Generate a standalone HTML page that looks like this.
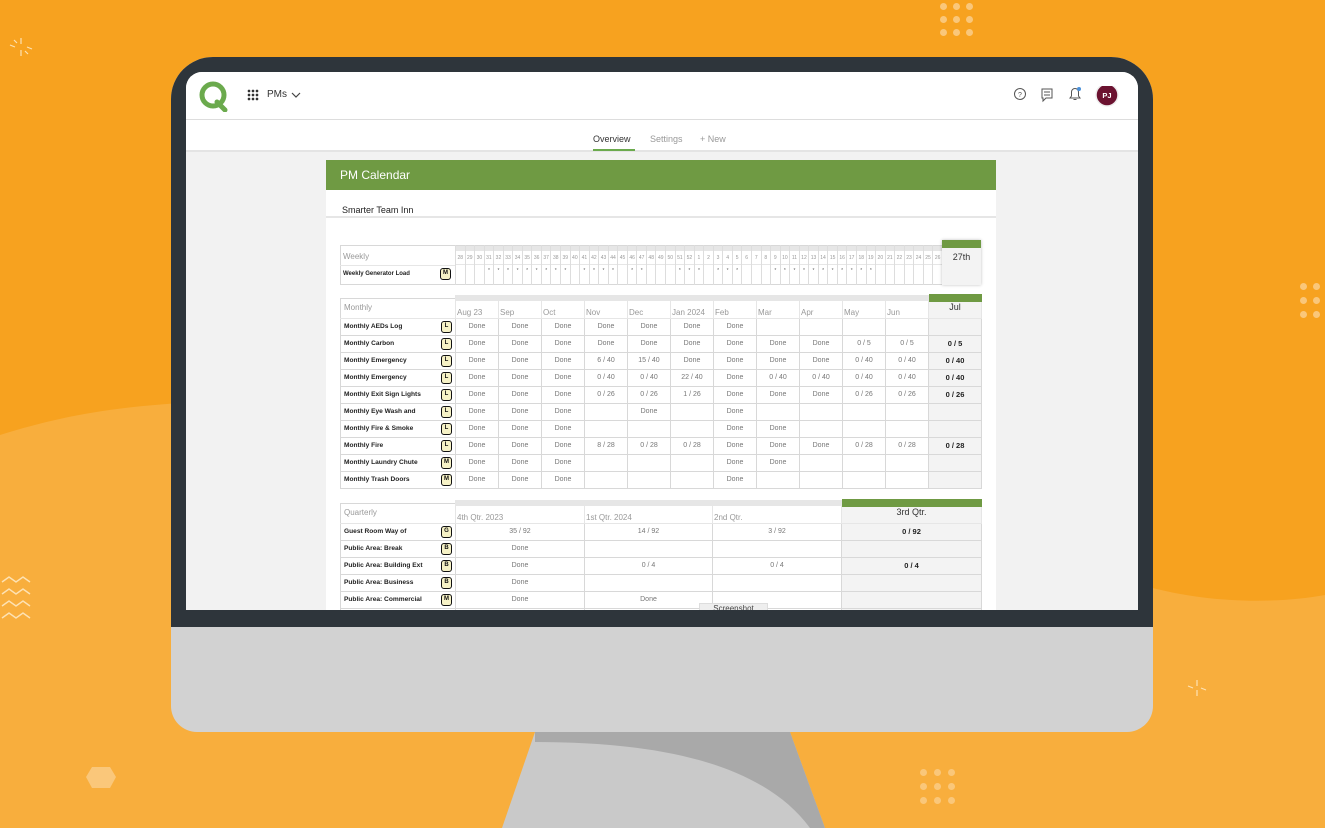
<!DOCTYPE html>
<html><head><meta charset="utf-8"><style>
*{box-sizing:border-box;margin:0;padding:0}
body{width:1325px;height:828px;overflow:hidden;position:relative;font-family:"Liberation Sans",sans-serif;background:#F7A21F}
.abs{position:absolute}
table{border-collapse:collapse;table-layout:fixed;position:absolute;font-size:7px}
td{border:1px solid #d8d8d8;height:17px;text-align:center;color:#777;white-space:nowrap;overflow:hidden;padding:0;vertical-align:middle}
td.l{text-align:left;padding-left:3px;color:#222;font-weight:bold;font-size:6.6px;position:relative}
td.l .bd{position:absolute;right:3px;top:2px}
td.cur{background:#f3f3f3;color:#222;font-weight:bold;font-size:7.5px}
.bd{display:block;width:11px;height:12px;border:1.5px solid #111;border-radius:3px;background:#f6f2c6;font-size:6px;line-height:9px;text-align:center;color:#111;font-weight:bold}
th{font-weight:normal;color:#999;text-align:left;font-size:8px;border:1px solid #e6e6e6;border-top:6px solid #e6e6e6;padding:0 1px 1px;height:20px;vertical-align:bottom}
th.lab{border-top:1px solid #d8d8d8;border-left:1px solid #d8d8d8;color:#999;font-size:8px;padding-left:3px;vertical-align:middle}
th.cur{border-top:none;background:#f3f3f3;color:#333;font-size:9px;text-align:center;vertical-align:middle;position:relative}
.dot{position:absolute;width:7px;height:7px;border-radius:50%;background:#FAC77A}
</style></head><body>
<svg class="abs" style="left:0;top:0" width="1325" height="828">
<path d="M0 435 C80 410 150 400 300 400 L1100 570 C1180 605 1270 605 1325 595 L1325 828 L0 828Z" fill="#F8AE3D"/>
<polygon points="535,732 790,732 825,828 502,828" fill="#C9C9C9"/>
<path d="M535 732 L790 732 L825 828 L810 828 C760 760 650 742 535 742Z" fill="#A9A9A9"/>
<polygon points="92,767 110,767 116,777 110,788 92,788 86,777" fill="#FAC77A"/>
<path d="M2 582 l7 -5 l7 5 l7 -5 l7 5 M2 594 l7 -5 l7 5 l7 -5 l7 5 M2 606 l7 -5 l7 5 l7 -5 l7 5 M2 618 l7 -5 l7 5 l7 -5 l7 5" stroke="#FDE2B3" stroke-width="1.5" fill="none"/>
<path d="M21 44 l0 -6 M21 50 l0 6 M15 47 l-5 -2 M27 47 l5 2 M17 43 l-3 -3 M25 51 l3 3" stroke="#FDE2B3" stroke-width="1.2"/>
<path d="M1197 686 l0 -6 M1197 690 l0 6 M1193 688 l-5 -2 M1201 688 l5 2" stroke="#FDE2B3" stroke-width="1.2"/>
</svg>
<div class="abs" style="left:940px;top:3px;width:40px;height:40px">
<div class="dot" style="left:0;top:0"></div><div class="dot" style="left:13px;top:0"></div><div class="dot" style="left:26px;top:0"></div>
<div class="dot" style="left:0;top:13px"></div><div class="dot" style="left:13px;top:13px"></div><div class="dot" style="left:26px;top:13px"></div>
<div class="dot" style="left:0;top:26px"></div><div class="dot" style="left:13px;top:26px"></div><div class="dot" style="left:26px;top:26px"></div></div>
<div class="abs" style="left:1300px;top:283px;width:30px;height:40px">
<div class="dot" style="left:0;top:0"></div><div class="dot" style="left:13px;top:0"></div>
<div class="dot" style="left:0;top:14px"></div><div class="dot" style="left:13px;top:14px"></div>
<div class="dot" style="left:0;top:28px"></div><div class="dot" style="left:13px;top:28px"></div></div>
<div class="abs" style="left:920px;top:769px;width:40px;height:40px">
<div class="dot" style="left:0;top:0"></div><div class="dot" style="left:14px;top:0"></div><div class="dot" style="left:28px;top:0"></div>
<div class="dot" style="left:0;top:14px"></div><div class="dot" style="left:14px;top:14px"></div><div class="dot" style="left:28px;top:14px"></div>
<div class="dot" style="left:0;top:28px"></div><div class="dot" style="left:14px;top:28px"></div><div class="dot" style="left:28px;top:28px"></div></div>

<div class="abs" style="left:171px;top:57px;width:982px;height:675px;background:#D2D2D2;border-radius:42px 42px 26px 26px;overflow:hidden">
<div class="abs" style="left:0;top:0;width:982px;height:570px;background:#2E353B"></div>
</div>
<div class="abs" style="left:186px;top:72px;width:952px;height:538px;background:#F2F2F2;overflow:hidden;border-radius:16px 16px 0 0">
<div class="abs" style="left:0;top:0;width:952px;height:48px;background:#fff;border-bottom:1px solid #ddd"></div>
<svg class="abs" style="left:11px;top:8px" width="34" height="32"><circle cx="16" cy="15" r="11" fill="none" stroke="#6BAA4D" stroke-width="5"/><path d="M20 22 L28 30" stroke="#6BAA4D" stroke-width="5" stroke-linecap="round"/></svg>
<div class="abs" style="left:61px;top:17px;width:12px;height:12px;background:radial-gradient(circle,#333 1.2px,transparent 1.5px) 0 0/4px 4px"></div>
<div class="abs" style="left:81px;top:17px;font-size:10px;color:#333">PMs</div>
<svg class="abs" style="left:105px;top:20px" width="10" height="7"><path d="M1 1 L5 5 L9 1" stroke="#444" fill="none" stroke-width="1.2"/></svg>
<svg class="abs" style="left:826px;top:14px" width="110" height="24">
<circle cx="8" cy="8" r="5.5" fill="none" stroke="#555" stroke-width="1"/><text x="8" y="11" font-size="7" text-anchor="middle" fill="#555" font-family="Liberation Sans">?</text>
<path d="M30 3 h10 v9 h-6 l-3 3 v-3 h-1z M32 6 h6 M32 9 h6" fill="none" stroke="#555" stroke-width="1"/>
<path d="M58 12 h10 l-1.5 -2 v-4 a3.5 3.5 0 0 0 -7 0 v4z M61.5 13.5 h3" fill="none" stroke="#555" stroke-width="1"/>
<circle cx="67" cy="3" r="2" fill="#4A90D9"/>
<circle cx="95" cy="9" r="11" fill="#6B1230" stroke="#eee" stroke-width="1.5"/>
<text x="95" y="12" font-size="7.5" text-anchor="middle" fill="#fff" font-weight="bold" font-family="Liberation Sans">PJ</text></svg>
<div class="abs" style="left:0;top:48px;width:952px;height:32px;background:#fff;border-bottom:2px solid #e4e4e4"></div>
<div class="abs" style="left:407px;top:62px;font-size:9px;color:#333">Overview</div>
<div class="abs" style="left:407px;top:77px;width:42px;height:2px;background:#6BAA4D"></div>
<div class="abs" style="left:464px;top:62px;font-size:9px;color:#999">Settings</div>
<div class="abs" style="left:514px;top:62px;font-size:9px;color:#999">+ New</div>
<div class="abs" style="left:140px;top:88px;width:670px;height:460px;background:#fff">
<div style="height:30px;background:#6F9A43;color:#fff;font-size:12px;padding:8px 0 0 14px">PM Calendar</div>
<div style="height:28px;border-bottom:2px solid #e6e6e6;font-size:9px;color:#222;padding:15px 0 0 16px">Smarter Team Inn</div>
</div>
</div>
<div class="abs" style="left:186px;top:72px;width:952px;height:538px;overflow:hidden">
<div class="abs" style="left:-186px;top:-72px;width:1325px;height:828px">
<div class="abs" style="left:340px;top:245px;width:602px;height:40px;border:1px solid #d8d8d8;border-right:none"></div>
<div class="abs" style="left:343px;top:252px;font-size:8px;color:#999">Weekly</div>
<div class="abs" style="left:340px;top:265px;width:115px;height:1px;background:#e6e6e6"></div>
<div class="abs" style="left:343px;top:271px;font-size:6px;color:#222;font-weight:bold">Weekly Generator Load</div>
<div class="abs" style="left:440px;top:268px"><span class="bd">M</span></div>
<div id="wk" class="abs" style="left:455px;top:245px;width:487px;height:40px;display:flex"></div>
<div class="abs" style="left:942px;top:240px;width:39px;height:45px;background:#f3f3f3;box-shadow:0 0 3px rgba(0,0,0,.25)"><div style="height:8px;background:#6F9A43"></div><div style="text-align:center;font-size:9px;color:#333;padding-top:4px">27th</div></div>

<table style="left:340px;top:295px;width:641px">
<colgroup><col style="width:115px"><col span="11" style="width:43px"><col style="width:53px"></colgroup>
<tr><th class="lab">Monthly</th><th>Aug 23</th><th>Sep</th><th>Oct</th><th>Nov</th><th>Dec</th><th>Jan 2024</th><th>Feb</th><th>Mar</th><th>Apr</th><th>May</th><th>Jun</th><th class="cur"><div style="position:absolute;left:0;top:-4px;width:53px;height:8px;background:#6F9A43"></div>Jul</th></tr>
<tr><td class="l">Monthly AEDs Log<span class="bd">L</span></td><td>Done</td><td>Done</td><td>Done</td><td>Done</td><td>Done</td><td>Done</td><td>Done</td><td></td><td></td><td></td><td></td><td class="cur"></td></tr>
<tr><td class="l">Monthly Carbon<span class="bd">L</span></td><td>Done</td><td>Done</td><td>Done</td><td>Done</td><td>Done</td><td>Done</td><td>Done</td><td>Done</td><td>Done</td><td>0 / 5</td><td>0 / 5</td><td class="cur">0 / 5</td></tr>
<tr><td class="l">Monthly Emergency<span class="bd">L</span></td><td>Done</td><td>Done</td><td>Done</td><td>6 / 40</td><td>15 / 40</td><td>Done</td><td>Done</td><td>Done</td><td>Done</td><td>0 / 40</td><td>0 / 40</td><td class="cur">0 / 40</td></tr>
<tr><td class="l">Monthly Emergency<span class="bd">L</span></td><td>Done</td><td>Done</td><td>Done</td><td>0 / 40</td><td>0 / 40</td><td>22 / 40</td><td>Done</td><td>0 / 40</td><td>0 / 40</td><td>0 / 40</td><td>0 / 40</td><td class="cur">0 / 40</td></tr>
<tr><td class="l">Monthly Exit Sign Lights<span class="bd">L</span></td><td>Done</td><td>Done</td><td>Done</td><td>0 / 26</td><td>0 / 26</td><td>1 / 26</td><td>Done</td><td>Done</td><td>Done</td><td>0 / 26</td><td>0 / 26</td><td class="cur">0 / 26</td></tr>
<tr><td class="l">Monthly Eye Wash and<span class="bd">L</span></td><td>Done</td><td>Done</td><td>Done</td><td></td><td>Done</td><td></td><td>Done</td><td></td><td></td><td></td><td></td><td class="cur"></td></tr>
<tr><td class="l">Monthly Fire &amp; Smoke<span class="bd">L</span></td><td>Done</td><td>Done</td><td>Done</td><td></td><td></td><td></td><td>Done</td><td>Done</td><td></td><td></td><td></td><td class="cur"></td></tr>
<tr><td class="l">Monthly Fire<span class="bd">L</span></td><td>Done</td><td>Done</td><td>Done</td><td>8 / 28</td><td>0 / 28</td><td>0 / 28</td><td>Done</td><td>Done</td><td>Done</td><td>0 / 28</td><td>0 / 28</td><td class="cur">0 / 28</td></tr>
<tr><td class="l">Monthly Laundry Chute<span class="bd">M</span></td><td>Done</td><td>Done</td><td>Done</td><td></td><td></td><td></td><td>Done</td><td>Done</td><td></td><td></td><td></td><td class="cur"></td></tr>
<tr><td class="l">Monthly Trash Doors<span class="bd">M</span></td><td>Done</td><td>Done</td><td>Done</td><td></td><td></td><td></td><td>Done</td><td></td><td></td><td></td><td></td><td class="cur"></td></tr>
</table>

<table style="left:340px;top:500px;width:641px">
<colgroup><col style="width:115px"><col style="width:129px"><col style="width:128px"><col style="width:129px"><col style="width:140px"></colgroup>
<tr><th class="lab">Quarterly</th><th>4th Qtr. 2023</th><th>1st Qtr. 2024</th><th>2nd Qtr.</th><th class="cur"><div style="position:absolute;left:0;top:-4px;width:140px;height:8px;background:#6F9A43"></div>3rd Qtr.</th></tr>
<tr><td class="l">Guest Room Way of<span class="bd">G</span></td><td>35 / 92</td><td>14 / 92</td><td>3 / 92</td><td class="cur">0 / 92</td></tr>
<tr><td class="l">Public Area: Break<span class="bd">B</span></td><td>Done</td><td></td><td></td><td class="cur"></td></tr>
<tr><td class="l">Public Area: Building Ext<span class="bd">B</span></td><td>Done</td><td>0 / 4</td><td>0 / 4</td><td class="cur">0 / 4</td></tr>
<tr><td class="l">Public Area: Business<span class="bd">B</span></td><td>Done</td><td></td><td></td><td class="cur"></td></tr>
<tr><td class="l">Public Area: Commercial<span class="bd">M</span></td><td>Done</td><td>Done</td><td></td><td class="cur"></td></tr>
<tr><td class="l">&nbsp;<span class="bd">M</span></td><td></td><td></td><td></td><td class="cur"></td></tr>
</table>
<div class="abs" style="left:699px;top:603px;width:69px;height:12px;background:#eee;border:1px solid #ddd;font-size:8px;color:#444;text-align:center">Screenshot</div>
</div></div>
<script>
var w=[28,29,30,31,32,33,34,35,36,37,38,39,40,41,42,43,44,45,46,47,48,49,50,51,52,1,2,3,4,5,6,7,8,9,10,11,12,13,14,15,16,17,18,19,20,21,22,23,24,25,26];
var s1=[31,32,33,34,35,36,37,38,39,41,42,43,44,46,47,51,52];
var s2=[1,3,4,5,9,10,11,12,13,14,15,16,17,18,19];
var h='';w.forEach(function(n,i){var star=i<25?s1.indexOf(n)>=0:s2.indexOf(n)>=0;
h+='<div style="flex:1;border-left:1px solid #ddd;height:40px;font-size:5px;color:#999;text-align:center"><div style="height:5px;background:#e6e6e6;margin-top:1px"></div><div style="height:14px;line-height:14px;border-bottom:1px solid #e6e6e6">'+n+'</div><div style="line-height:12px;color:#666">'+(star?'*':'')+'</div></div>';});
document.getElementById('wk').innerHTML=h;
</script>
</body></html>
